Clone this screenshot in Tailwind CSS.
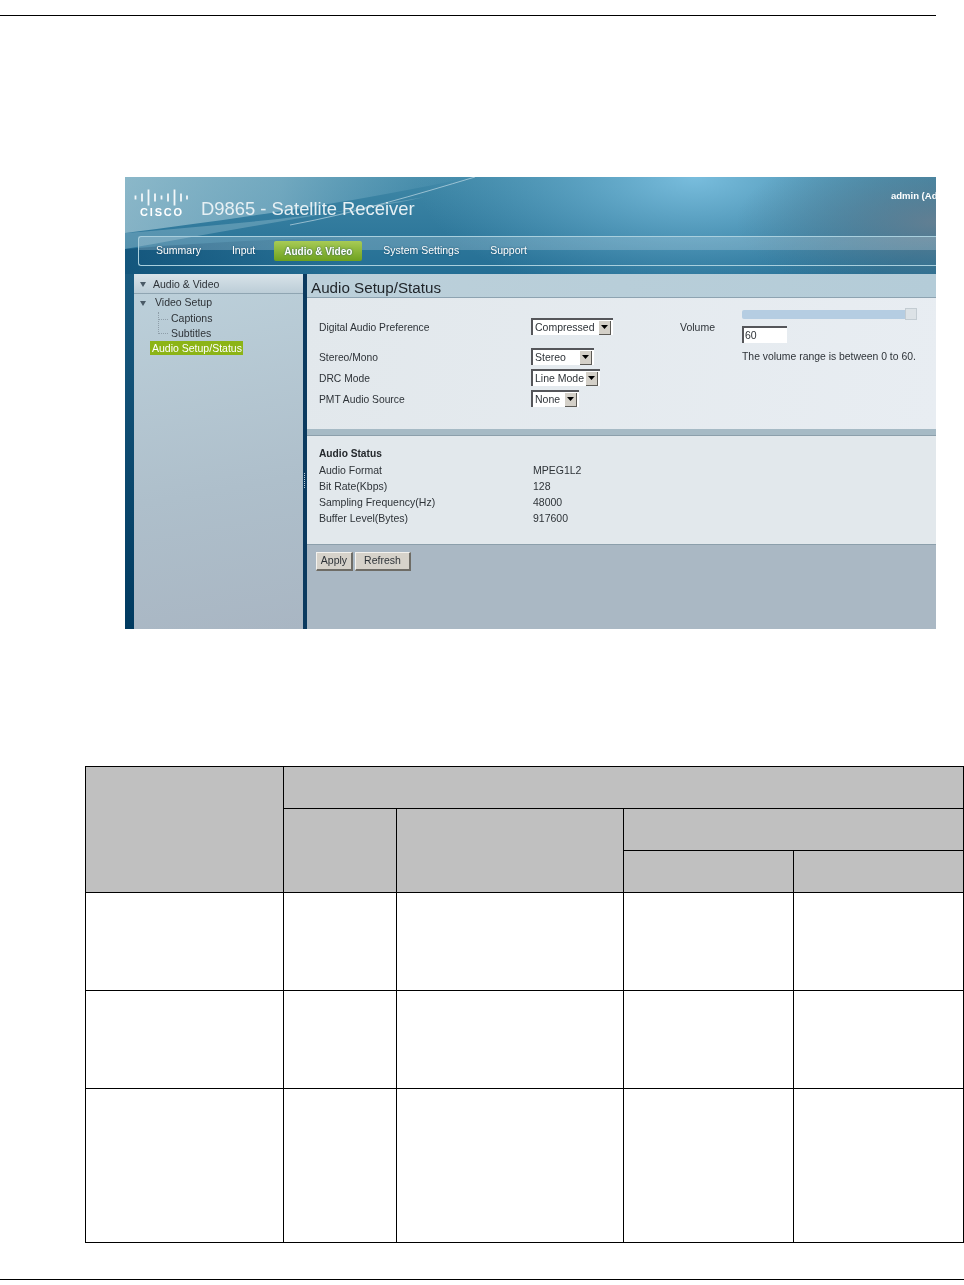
<!DOCTYPE html>
<html lang="en">
  <head>
    <meta charset="UTF-8" />
    <title>D9865 - Audio Setup/Status</title>
    <script src="https://cdn.jsdelivr.net/npm/@tailwindcss/browser@4"></script>
  </head>
  <body class="bg-white text-black [font-family:'Liberation_Sans',sans-serif]">
    <div class="w-[964px] h-[1285px] overflow-hidden">
      <div class="mt-[15px] w-[936px] h-px bg-black"></div>

      <!-- screenshot of the receiver's web ui -->
      <div class="ml-[125px] mt-[161px] w-[811px] h-[452px] overflow-hidden flex flex-col blur-[0.3px] text-[#2e3338] text-[10.5px]">
        <!-- header -->
        <div class="relative h-[97px] shrink-0 overflow-hidden bg-[linear-gradient(180deg,#3f87a6,#246e94)]">
          <svg class="absolute left-0 top-0" width="811" height="97" viewBox="0 0 811 97">
            <defs>
              <radialGradient id="glow" gradientUnits="userSpaceOnUse" cx="570" cy="0" r="280" gradientTransform="translate(0 0) scale(1 0.45)">
                <stop offset="0" stop-color="#7cc0e0" stop-opacity="0.95" />
                <stop offset="1" stop-color="#5fa5c6" stop-opacity="0" />
              </radialGradient>
              <radialGradient id="shade" gradientUnits="userSpaceOnUse" cx="811" cy="45" r="200" gradientTransform="translate(0 27) scale(1 0.4)">
                <stop offset="0" stop-color="#6a7f90" stop-opacity="0.85" />
                <stop offset="1" stop-color="#4a7388" stop-opacity="0" />
              </radialGradient>
              <linearGradient id="wedge" x1="0" y1="0" x2="1" y2="0">
                <stop offset="0" stop-color="#b4d2dc" stop-opacity="0.65" />
                <stop offset="0.45" stop-color="#a5cbd9" stop-opacity="0.5" />
                <stop offset="1" stop-color="#8cc2d8" stop-opacity="0" />
              </linearGradient>
              <linearGradient id="corner" x1="0" y1="0" x2="1" y2="0">
                <stop offset="0" stop-color="#0d4d74" stop-opacity="0.75" />
                <stop offset="1" stop-color="#0d4d74" stop-opacity="0" />
              </linearGradient>
            </defs>
            <rect width="811" height="97" fill="url(#glow)" />
            <rect width="811" height="97" fill="url(#shade)" />
            <path d="M0 56 C110 42 250 22 345 0 L0 0Z" fill="url(#wedge)" />
            <path d="M0 56 C120 46 230 36 300 20 C200 36 90 56 0 72Z" fill="#b9d6e0" opacity="0.3" />
            <path d="M165 48 C230 36 290 18 350 0" fill="none" stroke="#e3f1f5" stroke-width="1" opacity="0.55" />
            <path d="M0 72 L0 97 L230 97 L230 60 C150 62 70 66 0 72Z" fill="url(#corner)" />
            <g stroke="#f2f7f9" stroke-width="1.8">
              <path d="M10.5 18.5v4M17 16.5v8M23.5 12.5v16M30 16.5v8M36.500 18.500v4M43 16.500v8M49.500 12.500v16M56 16.500v8M62 18.500v4" />
            </g>
          </svg>
          <div class="relative flex items-start h-[59px]">
            <div class="ml-[11px] mt-[29px] w-[52px] text-center text-[11px] leading-[13px] font-bold tracking-[1.8px] text-white">CISCO</div>
            <div class="ml-[13px] mt-[20px] text-[18.4px] leading-[24px] text-[#e6f0f4]">D9865 - Satellite Receiver</div>
            <div class="ml-auto mt-[13px] w-[45px] whitespace-nowrap overflow-hidden text-[9.5px] leading-[12px] font-bold text-white">admin (Admin)</div>
          </div>
          <!-- nav -->
          <div class="relative ml-[13px] h-[30px] rounded-l-[3px] border border-r-0 border-[#a9cfdd] bg-[linear-gradient(180deg,#ffffff33_0%,#ffffff33_48%,#ffffff00_48%,#ffffff00_100%)] flex items-center text-white text-[10.5px] [text-shadow:0_0_2px_#1f4f6b]">
            <span class="ml-[17px]">Summary</span>
            <span class="ml-[31px]">Input</span>
            <span class="ml-[19px] w-[88px] h-[20px] rounded-[2px] bg-[linear-gradient(180deg,#a8cb55,#6ea11f)] text-[10px] font-bold flex items-center justify-center">Audio &amp; Video</span>
            <span class="ml-[21px]">System Settings</span>
            <span class="ml-[31px]">Support</span>
          </div>
        </div>

        <!-- body -->
        <div class="flex flex-1 min-h-0 bg-[linear-gradient(180deg,#1a5b80,#003a60)]">
          <!-- sidebar -->
          <div class="ml-[9px] w-[169px] shrink-0 bg-[linear-gradient(170deg,#bdd1db_0%,#aebfcb_60%,#a9b6c3_100%)]">
            <div class="h-[20px] flex items-center pt-[2px] border-b border-[#8fa5b2] bg-[linear-gradient(180deg,#d8e3e9,#bccdd7)]">
              <svg class="ml-[6px]" width="6" height="5" viewBox="0 0 6 5"><path d="M0 0h6L3 5z" fill="#4a5a66" /></svg>
              <span class="ml-[7px]">Audio &amp; Video</span>
            </div>
            <div class="flex items-center h-[16px] mt-[1px]">
              <svg class="ml-[6px]" width="6" height="5" viewBox="0 0 6 5"><path d="M0 0h6L3 5z" fill="#4a5a66" /></svg>
              <span class="ml-[9px]">Video Setup</span>
            </div>
            <div class="relative ml-[37px]">
              <div class="absolute -left-[13px] top-0 w-[10px] h-[8px] border-l border-b border-dotted border-[#8e9ea9] mt-[1px]"></div>
              <div class="absolute -left-[13px] top-[8px] w-[10px] h-[15px] border-l border-b border-dotted border-[#8e9ea9]"></div>
              <div class="h-[15px] leading-[15px]">Captions</div>
              <div class="h-[15px] leading-[15px]">Subtitles</div>
            </div>
            <div class="ml-[16px] w-[93px] h-[14px] leading-[14px] pl-[2px] bg-[#8cb416] text-white">Audio Setup/Status</div>
          </div>

          <!-- splitter -->
          <div class="relative w-[4px] shrink-0 bg-[#0b3a5f]">
            <div class="absolute left-[1px] top-[199px] w-px h-[15px] border-l border-dotted border-[#b9cbd6]"></div>
          </div>

          <!-- main panel -->
          <div class="flex-1 min-w-0 flex flex-col bg-[#aab8c4]">
            <div class="h-[24px] shrink-0 border-b border-[#8da3b1] bg-[linear-gradient(90deg,#bcd0da,#b4ccd8)] pl-[4px] text-[15.2px] leading-[28px] text-[#1e2328]">Audio Setup/Status</div>

            <div class="h-[131px] shrink-0 flex pl-[12px] bg-[linear-gradient(100deg,#e2e8ec,#e8edf2)]">
              <div class="w-[361px] shrink-0 pt-[20px]">
                <div class="flex items-center h-[17px]">
                  <span class="w-[212px] h-[17px] leading-[19px] shrink-0 text-[10.3px]">Digital Audio Preference</span>
                  <div class="w-[82px] h-[17px] flex items-center border-t-2 border-l-2 border-[#55565a] bg-white pl-[2px]">
                    <span class="flex-1">Compressed</span>
                    <span class="w-[12px] h-[14px] mr-[2px] flex items-center justify-center bg-[#d4d0c8] border-r border-b border-[#5c5a55]"><svg width="7" height="4" viewBox="0 0 7 4"><path d="M0 0h7L3.5 4z" fill="#000" /></svg></span>
                  </div>
                </div>
                <div class="flex items-center h-[17px] mt-[13px]">
                  <span class="w-[212px] h-[17px] leading-[19px] shrink-0 text-[10.3px]">Stereo/Mono</span>
                  <div class="w-[63px] h-[17px] flex items-center border-t-2 border-l-2 border-[#55565a] bg-white pl-[2px]">
                    <span class="flex-1">Stereo</span>
                    <span class="w-[12px] h-[14px] mr-[2px] flex items-center justify-center bg-[#d4d0c8] border-r border-b border-[#5c5a55]"><svg width="7" height="4" viewBox="0 0 7 4"><path d="M0 0h7L3.5 4z" fill="#000" /></svg></span>
                  </div>
                </div>
                <div class="flex items-center h-[17px] mt-[4px]">
                  <span class="w-[212px] h-[17px] leading-[19px] shrink-0 text-[10.3px]">DRC Mode</span>
                  <div class="w-[69px] h-[17px] flex items-center border-t-2 border-l-2 border-[#55565a] bg-white pl-[2px]">
                    <span class="flex-1">Line Mode</span>
                    <span class="w-[12px] h-[14px] mr-[2px] flex items-center justify-center bg-[#d4d0c8] border-r border-b border-[#5c5a55]"><svg width="7" height="4" viewBox="0 0 7 4"><path d="M0 0h7L3.5 4z" fill="#000" /></svg></span>
                  </div>
                </div>
                <div class="flex items-center h-[17px] mt-[4px]">
                  <span class="w-[212px] h-[17px] leading-[19px] shrink-0 text-[10.3px]">PMT Audio Source</span>
                  <div class="w-[48px] h-[17px] flex items-center border-t-2 border-l-2 border-[#55565a] bg-white pl-[2px]">
                    <span class="flex-1">None</span>
                    <span class="w-[12px] h-[14px] mr-[2px] flex items-center justify-center bg-[#d4d0c8] border-r border-b border-[#5c5a55]"><svg width="7" height="4" viewBox="0 0 7 4"><path d="M0 0h7L3.5 4z" fill="#000" /></svg></span>
                  </div>
                </div>
              </div>
              <div class="w-[62px] shrink-0 pt-[23px] leading-[12px]">Volume</div>
              <div class="pt-[10px]">
                <div class="flex items-center w-[175px] h-[12px]">
                  <div class="w-[163px] h-[9px] rounded-l-[2px] bg-[#b5cde2]"></div>
                  <div class="w-[12px] h-[12px] bg-[#dce2e6] border border-[#c3ccd2]"></div>
                </div>
                <div class="mt-[6px] w-[45px] h-[17px] border-t-2 border-l-2 border-[#55565a] bg-white pl-[1px] leading-[15px]">60</div>
                <div class="mt-[7px] whitespace-nowrap leading-[14px] text-[10.4px]">The volume range is between 0 to 60.</div>
              </div>
            </div>

            <div class="h-[7px] shrink-0 bg-[#a6bac5] border-b border-[#8c9fab]"></div>

            <div class="h-[109px] shrink-0 border-b border-[#8c9fab] bg-[#e2e8ec] pl-[12px] pt-[10px] grid grid-cols-[214px_1fr] auto-rows-[16px] leading-[16px]">
              <span class="col-span-2 font-bold text-[#24282c] text-[10.2px]">Audio Status</span>
              <span>Audio Format</span><span>MPEG1L2</span>
              <span>Bit Rate(Kbps)</span><span>128</span>
              <span>Sampling Frequency(Hz)</span><span>48000</span>
              <span>Buffer Level(Bytes)</span><span>917600</span>
            </div>

            <div class="flex gap-[2px] ml-[9px] mt-[7px]">
              <button class="w-[37px] h-[19px] bg-[#d6d2ca] border-t border-l border-[#f4f2ee] border-r-2 border-b-2 border-r-[#6e6c66] border-b-[#6e6c66] text-[10.5px]">Apply</button>
              <button class="w-[56px] h-[19px] bg-[#d6d2ca] border-t border-l border-[#f4f2ee] border-r-2 border-b-2 border-r-[#6e6c66] border-b-[#6e6c66] text-[10.5px]">Refresh</button>
            </div>
          </div>
        </div>
      </div>

      <!-- empty spec table -->
      <table class="ml-[85px] mt-[137px] w-[878px] table-fixed border-collapse">
        <colgroup>
          <col class="w-[198px]" />
          <col class="w-[113px]" />
          <col class="w-[227px]" />
          <col class="w-[170px]" />
          <col class="w-[170px]" />
        </colgroup>
        <tbody>
          <tr class="h-[42px] bg-[#c0c0c0]">
            <td rowspan="3" class="border border-black"></td>
            <td colspan="4" class="border border-black"></td>
          </tr>
          <tr class="h-[42px] bg-[#c0c0c0]">
            <td rowspan="2" class="border border-black"></td>
            <td rowspan="2" class="border border-black"></td>
            <td colspan="2" class="border border-black"></td>
          </tr>
          <tr class="h-[42px] bg-[#c0c0c0]">
            <td class="border border-black"></td>
            <td class="border border-black"></td>
          </tr>
          <tr class="h-[98px]">
            <td class="border border-black"></td>
            <td class="border border-black"></td>
            <td class="border border-black"></td>
            <td class="border border-black"></td>
            <td class="border border-black"></td>
          </tr>
          <tr class="h-[98px]">
            <td class="border border-black"></td>
            <td class="border border-black"></td>
            <td class="border border-black"></td>
            <td class="border border-black"></td>
            <td class="border border-black"></td>
          </tr>
          <tr class="h-[154px]">
            <td class="border border-black"></td>
            <td class="border border-black"></td>
            <td class="border border-black"></td>
            <td class="border border-black"></td>
            <td class="border border-black"></td>
          </tr>
        </tbody>
      </table>

      <div class="mt-[36px] w-[964px] h-px bg-black"></div>
    </div>
  </body>
</html>
